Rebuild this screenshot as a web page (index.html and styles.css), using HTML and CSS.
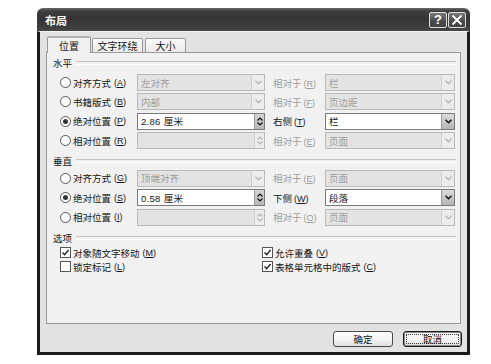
FILE: index.html
```html
<!DOCTYPE html>
<html lang="zh-CN">
<head>
<meta charset="utf-8">
<title>布局</title>
<link rel="stylesheet" href="styles.css">
</head>
<body>
<div class="page">
  <div class="win">
    <div class="titlebar">
      <span class="title">布局</span>
      <div class="tbtns">
        <span class="tbtn">?</span>
        <span class="tbtn"><svg width="12" height="12" viewBox="0 0 12 12"><path d="M1.5 1.5 L10.5 10.5 M10.5 1.5 L1.5 10.5" stroke="#fff" stroke-width="1.8" fill="none"/></svg></span>
      </div>
    </div>
    <div class="client">
      <div class="tabs">
        <div class="tab active">位置</div>
        <div class="tab t2">文字环绕</div>
        <div class="tab t3">大小</div>
      </div>
      <div class="panel">
        <div class="ghead">水平</div>
        <div class="rows">
          <div class="row">
            <div class="opt"><span class="radio"></span>对齐方式<span class="mn">(<u>A</u>)</span></div>
            <div class="field f1 dis"><span class="val">左对齐</span><span class="drop"><svg width="7" height="5" viewBox="0 0 7 5"><path d="M0.5 0.8 L3.5 3.8 L6.5 0.8" stroke="currentColor" stroke-width="1.3" fill="none"/></svg></span></div>
            <div class="rl dis">相对于<span class="mn">(<u>R</u>)</span></div>
            <div class="field f2 dis"><span class="val">栏</span><span class="drop"><svg width="7" height="5" viewBox="0 0 7 5"><path d="M0.5 0.8 L3.5 3.8 L6.5 0.8" stroke="currentColor" stroke-width="1.3" fill="none"/></svg></span></div>
          </div>
          <div class="row">
            <div class="opt"><span class="radio"></span>书籍版式<span class="mn">(<u>B</u>)</span></div>
            <div class="field f1 dis"><span class="val">内部</span><span class="drop"><svg width="7" height="5" viewBox="0 0 7 5"><path d="M0.5 0.8 L3.5 3.8 L6.5 0.8" stroke="currentColor" stroke-width="1.3" fill="none"/></svg></span></div>
            <div class="rl dis">相对于<span class="mn">(<u>F</u>)</span></div>
            <div class="field f2 dis"><span class="val">页边距</span><span class="drop"><svg width="7" height="5" viewBox="0 0 7 5"><path d="M0.5 0.8 L3.5 3.8 L6.5 0.8" stroke="currentColor" stroke-width="1.3" fill="none"/></svg></span></div>
          </div>
          <div class="row">
            <div class="opt"><span class="radio on"></span>绝对位置<span class="mn">(<u>P</u>)</span></div>
            <div class="field f1"><span class="val num">2.86 厘米</span><span class="spin"><svg width="6" height="9" viewBox="0 0 6 9"><path d="M0.5 3.5 L3 1 L5.5 3.5 M0.5 5.5 L3 8 L5.5 5.5" stroke="currentColor" stroke-width="1.2" fill="none"/></svg></span></div>
            <div class="rl">右侧<span class="mn">(<u>T</u>)</span></div>
            <div class="field f2"><span class="val">栏</span><span class="drop"><svg width="7" height="5" viewBox="0 0 7 5"><path d="M0.5 0.8 L3.5 3.8 L6.5 0.8" stroke="currentColor" stroke-width="1.5" fill="none"/></svg></span></div>
          </div>
          <div class="row">
            <div class="opt"><span class="radio"></span>相对位置<span class="mn">(<u>R</u>)</span></div>
            <div class="field f1 dis"><span class="val"></span><span class="spin"><svg width="6" height="9" viewBox="0 0 6 9"><path d="M0.5 3.5 L3 1 L5.5 3.5 M0.5 5.5 L3 8 L5.5 5.5" stroke="currentColor" stroke-width="1.2" fill="none"/></svg></span></div>
            <div class="rl dis">相对于<span class="mn">(<u>E</u>)</span></div>
            <div class="field f2 dis"><span class="val">页面</span><span class="drop"><svg width="7" height="5" viewBox="0 0 7 5"><path d="M0.5 0.8 L3.5 3.8 L6.5 0.8" stroke="currentColor" stroke-width="1.3" fill="none"/></svg></span></div>
          </div>
        </div>

        <div class="ghead g2">垂直</div>
        <div class="rows v">
          <div class="row">
            <div class="opt"><span class="radio"></span>对齐方式<span class="mn">(<u>G</u>)</span></div>
            <div class="field f1 dis"><span class="val">顶端对齐</span><span class="drop"><svg width="7" height="5" viewBox="0 0 7 5"><path d="M0.5 0.8 L3.5 3.8 L6.5 0.8" stroke="currentColor" stroke-width="1.3" fill="none"/></svg></span></div>
            <div class="rl dis">相对于<span class="mn">(<u>E</u>)</span></div>
            <div class="field f2 dis"><span class="val">页面</span><span class="drop"><svg width="7" height="5" viewBox="0 0 7 5"><path d="M0.5 0.8 L3.5 3.8 L6.5 0.8" stroke="currentColor" stroke-width="1.3" fill="none"/></svg></span></div>
          </div>
          <div class="row">
            <div class="opt"><span class="radio on"></span>绝对位置<span class="mn">(<u>S</u>)</span></div>
            <div class="field f1"><span class="val num">0.58 厘米</span><span class="spin"><svg width="6" height="9" viewBox="0 0 6 9"><path d="M0.5 3.5 L3 1 L5.5 3.5 M0.5 5.5 L3 8 L5.5 5.5" stroke="currentColor" stroke-width="1.2" fill="none"/></svg></span></div>
            <div class="rl">下侧<span class="mn">(<u>W</u>)</span></div>
            <div class="field f2"><span class="val">段落</span><span class="drop"><svg width="7" height="5" viewBox="0 0 7 5"><path d="M0.5 0.8 L3.5 3.8 L6.5 0.8" stroke="currentColor" stroke-width="1.5" fill="none"/></svg></span></div>
          </div>
          <div class="row">
            <div class="opt"><span class="radio"></span>相对位置<span class="mn">(<u>I</u>)</span></div>
            <div class="field f1 dis"><span class="val"></span><span class="spin"><svg width="6" height="9" viewBox="0 0 6 9"><path d="M0.5 3.5 L3 1 L5.5 3.5 M0.5 5.5 L3 8 L5.5 5.5" stroke="currentColor" stroke-width="1.2" fill="none"/></svg></span></div>
            <div class="rl dis">相对于<span class="mn">(<u>O</u>)</span></div>
            <div class="field f2 dis"><span class="val">页面</span><span class="drop"><svg width="7" height="5" viewBox="0 0 7 5"><path d="M0.5 0.8 L3.5 3.8 L6.5 0.8" stroke="currentColor" stroke-width="1.3" fill="none"/></svg></span></div>
          </div>
        </div>

        <div class="ghead g3">选项</div>
        <div class="opts">
          <div class="crow"><span class="cb"><svg width="9" height="9" viewBox="0 0 9 9"><path d="M1.5 4.5 L3.6 6.6 L7.6 2" stroke="#222" stroke-width="1.4" fill="none"/></svg></span>对象随文字移动<span class="mn">(<u>M</u>)</span></div>
          <div class="crow"><span class="cb"><svg width="9" height="9" viewBox="0 0 9 9"><path d="M1.5 4.5 L3.6 6.6 L7.6 2" stroke="#222" stroke-width="1.4" fill="none"/></svg></span>允许重叠<span class="mn">(<u>V</u>)</span></div>
          <div class="crow"><span class="cb"></span>锁定标记<span class="mn">(<u>L</u>)</span></div>
          <div class="crow"><span class="cb"><svg width="9" height="9" viewBox="0 0 9 9"><path d="M1.5 4.5 L3.6 6.6 L7.6 2" stroke="#222" stroke-width="1.4" fill="none"/></svg></span>表格单元格中的版式<span class="mn">(<u>C</u>)</span></div>
        </div>
      </div>
      <div class="footer">
        <div class="btn">确定</div>
        <div class="btn def"><span class="focus">取消</span></div>
      </div>
    </div>
  </div>
</div>
</body>
</html>
```

FILE: styles.css
```css
* { box-sizing: border-box; margin: 0; padding: 0; }

body {
  background: #ffffff;
  font-family: "Liberation Sans", "Noto Sans CJK SC", sans-serif;
  font-size: 9.5px;
  color: #141414;
}

.page { padding: 8px 0 0 37px; }

.win {
  width: 433px;
  height: 347px;
  display: flex;
  flex-direction: column;
}

.titlebar {
  height: 23px;
  border-radius: 6px 6px 0 0;
  background: linear-gradient(#6a6a6a 0, #3e3e3e 3px, #353535 45%, #3c3c3c 80%, #474747 100%);
  display: flex;
  align-items: center;
  justify-content: space-between;
  padding: 0 4px 0 8px;
}

.title {
  color: #ffffff;
  font-weight: bold;
  font-size: 11px;
  font-family: "Noto Sans CJK SC", sans-serif;
  line-height: 1;
  margin-top: 1px;
}

.tbtns { display: flex; gap: 1px; }

.tbtn {
  width: 18px;
  height: 16px;
  border: 1px solid #dcdcdc;
  border-radius: 2px;
  background: linear-gradient(#7a7a7a, #4a4a4a 60%, #444);
  display: flex;
  align-items: center;
  justify-content: center;
  color: #ffffff;
  font: bold 13px "Liberation Sans", sans-serif;
}

.client {
  flex: 1;
  background: #e2e2e2;
  border: 3px solid #1c1c1c;
  border-top: 1px solid #f4f4f4;
  padding: 4px 6px 0 6px;
  display: flex;
  flex-direction: column;
}

.tabs {
  display: flex;
  align-items: flex-end;
  height: 16px;
  padding-left: 1px;
  gap: 1px;
  position: relative;
  z-index: 1;
  font-family: "Noto Sans CJK SC", sans-serif;
  font-size: 10px;
}

.tab {
  height: 14px;
  border: 1px solid #9a9a9a;
  border-bottom: none;
  border-radius: 2px 2px 0 0;
  background: linear-gradient(#fbfbfb, #e9e9e9);
  display: flex;
  align-items: center;
  justify-content: center;
  line-height: 1;
}

.tab.active {
  width: 44px;
  height: 17px;
  margin-bottom: -1px;
  background: #f1f1f1;
  border-top: 2px solid #b0b0b0;
}

.tab.t2 { width: 51px; }
.tab.t3 { width: 41px; margin-left: 1px; }

.panel {
  height: 272px;
  border: 1px solid #9a9a9a;
  background: #f1f1f1;
  padding: 3px 4px 0 6px;
}

.ghead {
  display: flex;
  align-items: center;
  height: 14px;
  gap: 4px;
  font-family: "Noto Sans CJK SC", sans-serif;
}

.ghead::after {
  content: "";
  flex: 1;
  height: 2px;
  border-top: 1px solid #c4c4c4;
  border-bottom: 1px solid #ffffff;
}

.g2 { margin-top: 4px; }
.g3 { margin-top: 4px; }

.rows { margin-left: 7px; margin-top: 3px; }
.rows.v { margin-top: 0; }

.row {
  display: flex;
  align-items: center;
  height: 19.33px;
}

.rows.v .row { height: 19.5px; }

.opt {
  width: 77px;
  display: flex;
  align-items: center;
  white-space: nowrap;
}

.radio {
  width: 11px;
  height: 11px;
  border-radius: 50%;
  border: 1px solid #555555;
  background: #ffffff;
  margin-right: 2px;
  flex: none;
  display: flex;
  align-items: center;
  justify-content: center;
}

.radio.on::after {
  content: "";
  width: 5px;
  height: 5px;
  border-radius: 50%;
  background: #333333;
}

.mn {
  font-family: "Liberation Sans", sans-serif;
  font-size: 9px;
  margin-left: 3px;
}

.field {
  height: 17px;
  border: 1px solid #7a7a7a;
  background: #ffffff;
  display: flex;
  align-items: center;
  padding-left: 3px;
  color: #141414;
}

.field .val {
  flex: 1;
  white-space: nowrap;
  overflow: hidden;
}

.num { letter-spacing: 0.3px; }

.f1 { width: 128px; }
.f2 { width: 130px; }

.field.dis {
  background: #e3e3e3;
  border-color: #b9b9b9;
  color: #9e9e9e;
}

.rl {
  width: 60px;
  padding-left: 8px;
  white-space: nowrap;
  color: #141414;
}

.rl .mn { margin-left: 2px; }

.rl.dis { color: #9e9e9e; }

.drop {
  width: 13px;
  height: 15px;
  background: linear-gradient(#dcdcdc, #b5b5b5);
  border-left: 1px solid #9a9a9a;
  color: #111111;
  display: flex;
  align-items: center;
  justify-content: center;
}

.dis .drop {
  background: #ececec;
  border-left: 1px solid #d0d0d0;
  color: #b4b4b4;
}

.spin {
  width: 10px;
  height: 15px;
  background: linear-gradient(#d6d6d6, #b8b8b8);
  border-left: 1px solid #9a9a9a;
  color: #111111;
  display: flex;
  align-items: center;
  justify-content: center;
}

.dis .spin {
  background: #ececec;
  border-left: 1px solid #d0d0d0;
  color: #b4b4b4;
}

.opts {
  display: grid;
  grid-template-columns: 202px 1fr;
  margin-left: 7px;
  margin-top: 1px;
}

.crow {
  height: 14px;
  display: flex;
  align-items: center;
  white-space: nowrap;
}

.cb {
  width: 11px;
  height: 11px;
  border: 1px solid #555555;
  background: #ffffff;
  margin-right: 2px;
  display: flex;
  align-items: center;
  justify-content: center;
  flex: none;
}

.footer {
  display: flex;
  justify-content: flex-end;
  gap: 10px;
  margin-top: 7px;
  margin-right: -1px;
}

.btn {
  width: 60px;
  height: 16px;
  border: 1px solid #4a4a4a;
  border-radius: 3px;
  background: linear-gradient(#ffffff, #f2f2f2 60%, #dedede);
  display: flex;
  align-items: center;
  justify-content: center;
  font-family: "Noto Sans CJK SC", sans-serif;
}

.btn.def {
  width: 59px;
  border: 1px solid #1c1c1c;
  box-shadow: inset 0 0 0 1px #8a8a8a;
  padding: 2px;
}

.focus {
  flex: 1;
  align-self: stretch;
  border: 1px dotted #333333;
  display: flex;
  align-items: center;
  justify-content: center;
}
```
